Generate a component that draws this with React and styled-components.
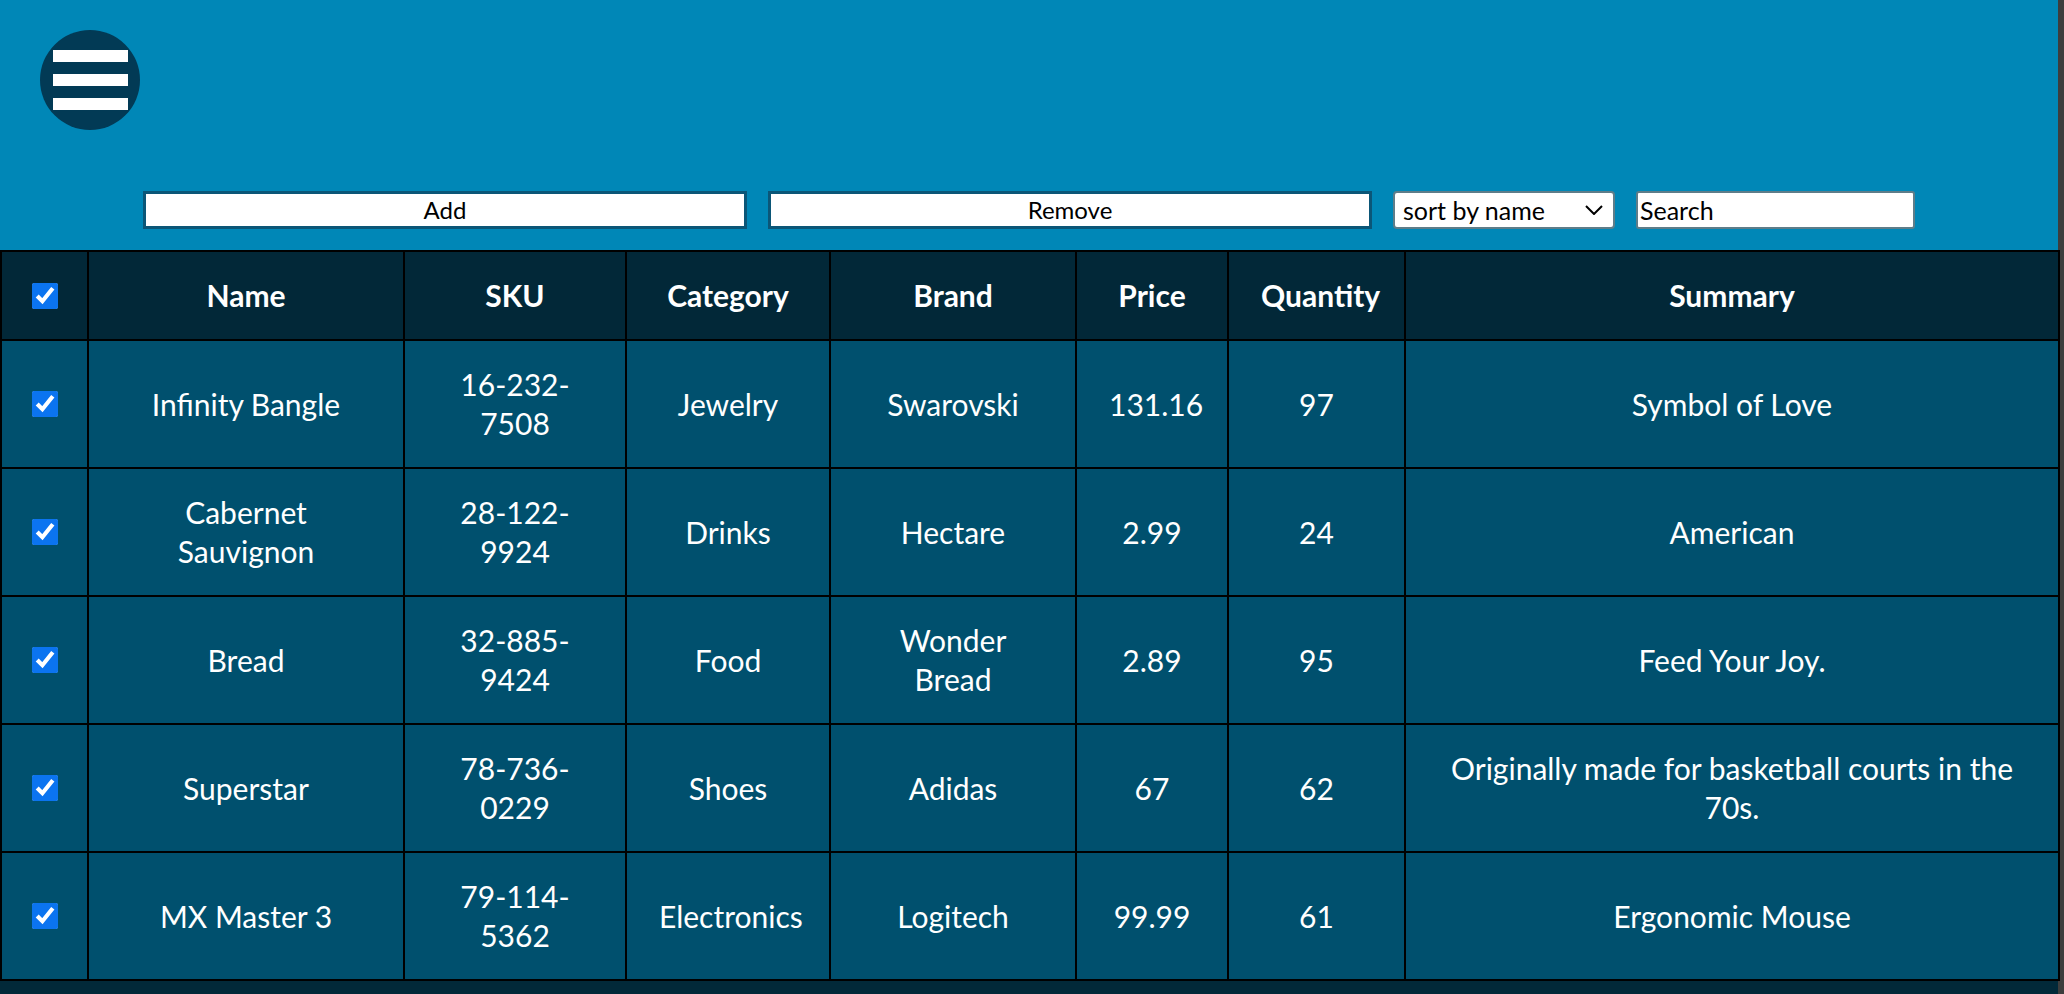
import React from 'react';
import styled, { createGlobalStyle } from 'styled-components';

const GlobalStyle = createGlobalStyle`
  html, body {
    margin: 0;
    padding: 0;
    background: #3d3d3d;
  }
  body {
    font-family: Lato, "Open Sans", "Liberation Sans", sans-serif;
  }
  #root {
    width: calc(100% - 6px);
    min-height: 994px;
    background: #022939;
  }
`;

const Header = styled.header`
  background: #0087b7;
  height: 250px;
  box-sizing: border-box;
  padding-top: 30px;
  display: flex;
  flex-direction: column;
`;

const MenuButton = styled.button`
  width: 100px;
  height: 100px;
  margin-left: 40px;
  padding: 0;
  border: none;
  border-radius: 50%;
  background: #023a55;
  display: flex;
  flex-direction: column;
  align-items: center;
  justify-content: center;
  gap: 12px;
  cursor: pointer;
`;

const Bar = styled.span`
  display: block;
  width: 75px;
  height: 12px;
  background: #ffffff;
`;

const Toolbar = styled.div`
  margin-top: 61px;
  display: flex;
  justify-content: center;
  align-items: center;
  gap: 21px;
`;

const ActionButton = styled.button`
  width: 604px;
  height: 38px;
  box-sizing: border-box;
  border: 3px solid #0b5677;
  background: #ffffff;
  color: #000;
  font-family: Lato, "Open Sans", sans-serif;
  font-size: 24px;
  line-height: 30px;
  padding: 0;
`;

const SelectWrap = styled.div`
  position: relative;
  width: 222px;
  height: 38px;
`;

const Select = styled.select`
  appearance: none;
  -webkit-appearance: none;
  width: 100%;
  height: 100%;
  box-sizing: border-box;
  border: 2px solid #5e7d89;
  border-radius: 4px;
  background: #ffffff;
  color: #000;
  font-family: Lato, "Open Sans", sans-serif;
  font-size: 25px;
  padding: 0 0 0 8px;
`;

const Chevron = styled.svg`
  position: absolute;
  right: 12px;
  top: 14px;
  width: 18px;
  height: 10px;
  pointer-events: none;
`;

const SearchInput = styled.input`
  width: 279px;
  height: 38px;
  box-sizing: border-box;
  border: 2px solid #5e7d89;
  border-radius: 3px;
  background: #ffffff;
  color: #000;
  font-family: Lato, "Open Sans", sans-serif;
  font-size: 25px;
  padding: 0 0 0 2px;
  &::placeholder {
    color: #000;
    opacity: 1;
  }
`;

const Table = styled.table`
  width: 100%;
  border-collapse: collapse;
  table-layout: fixed;
  color: #ffffff;
  font-size: 30px;
  line-height: 39px;
  text-align: center;
`;

const HeadCell = styled.th`
  background: #022838;
  border: 2px solid #000;
  font-weight: 700;
  padding: ${(p) => (p.$narrow ? '24px 0' : '24px 32px')};
  vertical-align: middle;
`;

const Cell = styled.td`
  background: #00506e;
  border: 2px solid #000;
  padding: ${(p) => (p.$narrow ? '24px 0' : '24px 32px')};
  vertical-align: middle;
`;

const Check = styled.input`
  display: block;
  width: 26px;
  height: 26px;
  margin: 0 auto;
  accent-color: #0b74f0;
`;

const columns = [
  { key: 'sel', width: 87 },
  { key: 'name', label: 'Name', width: 316 },
  { key: 'sku', label: 'SKU', width: 222 },
  { key: 'category', label: 'Category', width: 204 },
  { key: 'brand', label: 'Brand', width: 246 },
  { key: 'price', label: 'Price', width: 152 },
  { key: 'quantity', label: 'Quantity', width: 177 },
  { key: 'summary', label: 'Summary', width: 654 },
];

const products = [
  { name: 'Infinity Bangle', sku: '16-232-7508', category: 'Jewelry', brand: 'Swarovski', price: '131.16', quantity: '97', summary: 'Symbol of Love' },
  { name: 'Cabernet Sauvignon', sku: '28-122-9924', category: 'Drinks', brand: 'Hectare', price: '2.99', quantity: '24', summary: 'American' },
  { name: 'Bread', sku: '32-885-9424', category: 'Food', brand: 'Wonder Bread', price: '2.89', quantity: '95', summary: 'Feed Your Joy.' },
  { name: 'Superstar', sku: '78-736-0229', category: 'Shoes', brand: 'Adidas', price: '67', quantity: '62', summary: 'Originally made for basketball courts in the 70s.' },
  { name: 'MX Master 3', sku: '79-114-5362', category: 'Electronics', brand: 'Logitech', price: '99.99', quantity: '61', summary: 'Ergonomic Mouse' },
];

export default function App() {
  return (
    <>
      <GlobalStyle />
      <Header>
        <MenuButton aria-label="menu">
          <Bar />
          <Bar />
          <Bar />
        </MenuButton>
        <Toolbar>
          <ActionButton>Add</ActionButton>
          <ActionButton>Remove</ActionButton>
          <SelectWrap>
            <Select defaultValue="name">
              <option value="name">sort by name</option>
              <option value="price">sort by price</option>
              <option value="quantity">sort by quantity</option>
            </Select>
            <Chevron viewBox="0 0 18 10">
              <path d="M1 1 L9 9 L17 1" fill="none" stroke="#000" strokeWidth="2" />
            </Chevron>
          </SelectWrap>
          <SearchInput placeholder="Search" />
        </Toolbar>
      </Header>
      <Table>
        <colgroup>
          {columns.map((c) => (
            <col key={c.key} style={{ width: c.width }} />
          ))}
        </colgroup>
        <thead>
          <tr>
            <HeadCell $narrow>
              <Check type="checkbox" defaultChecked />
            </HeadCell>
            {columns.slice(1).map((c) => (
              <HeadCell key={c.key}>{c.label}</HeadCell>
            ))}
          </tr>
        </thead>
        <tbody>
          {products.map((p) => (
            <tr key={p.sku}>
              <Cell $narrow>
                <Check type="checkbox" defaultChecked />
              </Cell>
              <Cell>{p.name}</Cell>
              <Cell>{p.sku}</Cell>
              <Cell>{p.category}</Cell>
              <Cell>{p.brand}</Cell>
              <Cell>{p.price}</Cell>
              <Cell>{p.quantity}</Cell>
              <Cell>{p.summary}</Cell>
            </tr>
          ))}
        </tbody>
      </Table>
    </>
  );
}
